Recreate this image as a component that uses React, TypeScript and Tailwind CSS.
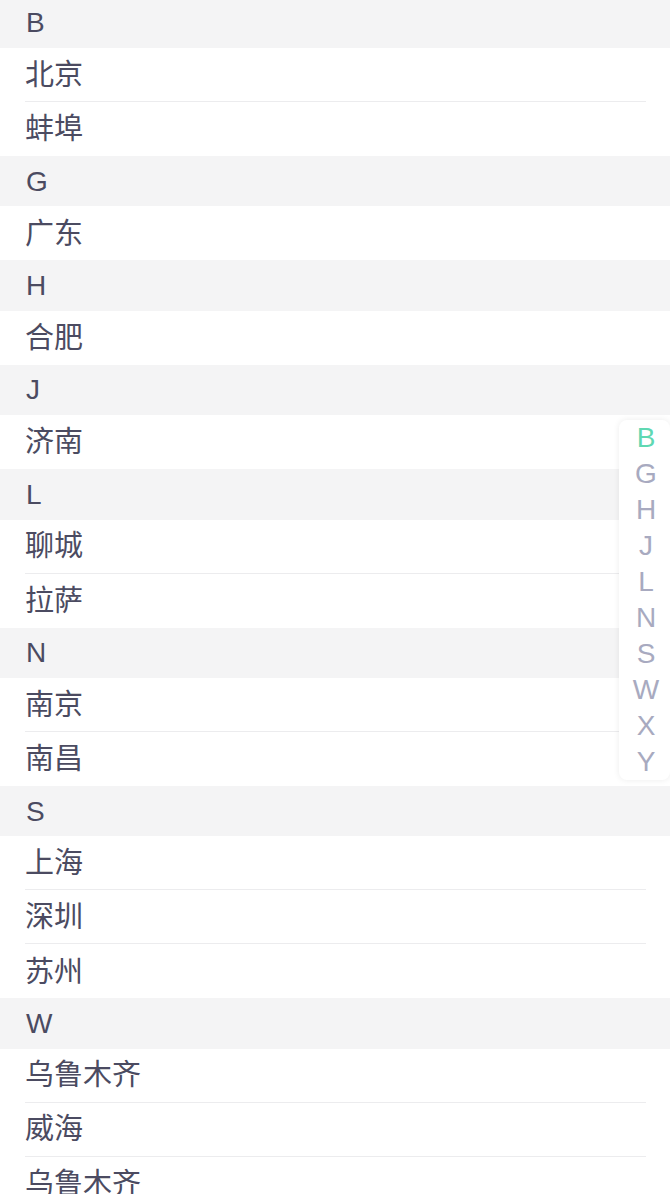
import { useState } from 'react';

const groups: { letter: string; cities: string[] }[] = [
  { letter: 'B', cities: ['北京', '蚌埠'] },
  { letter: 'G', cities: ['广东'] },
  { letter: 'H', cities: ['合肥'] },
  { letter: 'J', cities: ['济南'] },
  { letter: 'L', cities: ['聊城', '拉萨'] },
  { letter: 'N', cities: ['南京', '南昌'] },
  { letter: 'S', cities: ['上海', '深圳', '苏州'] },
  { letter: 'W', cities: ['乌鲁木齐', '威海', '乌鲁木齐'] },
  { letter: 'X', cities: ['西安', '厦门'] },
  { letter: 'Y', cities: ['烟台', '扬州'] },
];

export default function App() {
  const [active, setActive] = useState('B');

  return (
    <div className="relative h-[1194px] w-[670px] overflow-hidden bg-white font-['Liberation_Sans','Noto_Sans_CJK_SC',sans-serif] text-[#4b4b61]">
      <div className="-mt-[2.4px]">
        {groups.map((g) => (
          <div key={g.letter}>
            <div className="flex h-[50.4px] items-center bg-[#f4f4f5] px-[26px] pt-[1px] text-[28px]">{g.letter}</div>
            {g.cities.map((city, i) => (
              <div key={i} className="h-[54px] pl-[25px] pr-[24px]">
                <div
                  className={
                    'flex h-full items-center pt-[2px] text-[29px] ' +
                    (i < g.cities.length - 1 ? 'border-b border-[#ececee]' : '')
                  }
                >
                  {city}
                </div>
              </div>
            ))}
          </div>
        ))}
      </div>

      <div className="absolute right-0 top-[420px] flex w-[51px] flex-col items-center rounded-[8px] bg-white pl-[3px] shadow-[0_0_6px_rgba(0,0,0,0.08)]">
        {groups.map((g) => (
          <button
            key={g.letter}
            onClick={() => setActive(g.letter)}
            className={
              'flex h-[36px] w-full items-center justify-center text-[28px] leading-none ' +
              (active === g.letter ? 'text-[#5fd8b2]' : 'text-[#a8aac0]')
            }
          >
            {g.letter}
          </button>
        ))}
      </div>
    </div>
  );
}
